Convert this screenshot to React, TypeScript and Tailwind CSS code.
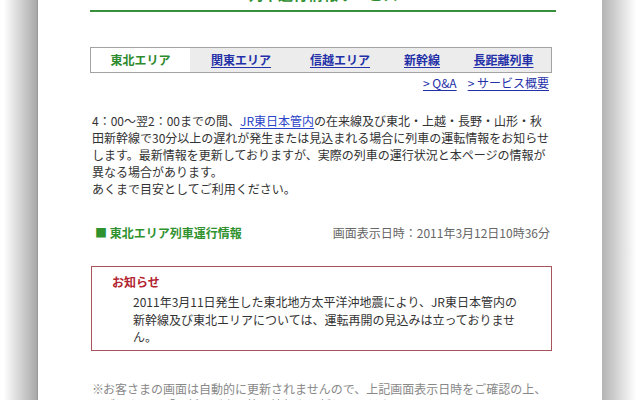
const tabs = [
  { label: "関東エリア", w: "w-[102px]" },
  { label: "信越エリア", w: "w-[96px]" },
  { label: "新幹線", w: "w-[68px]" },
  { label: "長距離列車", w: "flex-1" },
];

const App = () => {
  return (
    <div className="w-[640px] h-[400px] overflow-hidden flex bg-white font-['Noto_Sans_CJK_JP','Noto_Sans',sans-serif]">
      {/* window shadow left */}
      <div className="w-[37px] shrink-0 bg-gradient-to-r from-white from-[10%] to-[#a9a9a9]" />

      <div className="flex-1 bg-white border-l border-[#999]">
        <div className="ml-[52px] w-[466px]">
          {/* page title (cut off at top) */}
          <div className="-mt-[14px] pb-[8px] border-b-2 border-[#3a903a] text-center text-[15px] leading-[16px] font-bold text-[#2f8f2f]">
            列車運行情報サービス
          </div>

          {/* area tabs */}
          <div className="mt-[35px] w-[462px] h-[26px] flex border border-[#a3a3a3] text-[12px] font-bold">
            <div className="w-[99px] flex items-center justify-center bg-white text-[#2d8a2d]">
              東北エリア
            </div>
            {tabs.map((t) => (
              <div key={t.label} className={`${t.w} flex items-center justify-center bg-[#ececec]`}>
                <a href="#" className="text-[#2430a8] underline underline-offset-2">
                  {t.label}
                </a>
              </div>
            ))}
          </div>

          <div className="mt-[2px] w-[459px] flex justify-end gap-[11px] text-[12px] leading-[16px] text-[#2430a8]">
            <a href="#" className="underline underline-offset-2">&gt; Q&amp;A</a>
            <a href="#" className="underline underline-offset-2">&gt; サービス概要</a>
          </div>

          {/* description */}
          <p className="mt-[21px] ml-[2px] text-[12px] leading-[17px] text-[#333]">
            4：00～翌2：00までの間、
            <a href="#" className="text-[#2a44c8] underline underline-offset-2">JR東日本管内</a>
            の在来線及び東北・上越・長野・山形・秋
            <br />
            田新幹線で30分以上の遅れが発生または見込まれる場合に列車の運転情報をお知らせ
            <br />
            します。最新情報を更新しておりますが、実際の列車の運行状況と本ページの情報が
            <br />
            異なる場合があります。
            <br />
            あくまで目安としてご利用ください。
          </p>

          {/* section heading */}
          <div className="mt-[28px] w-[460px] flex justify-between text-[12px] leading-[16px]">
            <span className="ml-[5px] font-bold text-[#2f922f]">■ 東北エリア列車運行情報</span>
            <span className="text-[#666]">画面表示日時：2011年3月12日10時36分</span>
          </div>

          {/* notice */}
          <div className="mt-[25px] ml-[1px] w-[461px] border border-[#a8545c] pt-[7px] pb-[4px] text-[12px]">
            <div className="ml-[20px] leading-[16px] font-bold text-[#b2222e]">お知らせ</div>
            <p className="mt-[3px] ml-[41px] leading-[17.5px] text-[#333]">
              2011年3月11日発生した東北地方太平洋沖地震により、JR東日本管内の
              <br />
              新幹線及び東北エリアについては、運転再開の見込みは立っておりませ
              <br />
              ん。
            </p>
          </div>

          {/* footnote */}
          <div className="mt-[30px] ml-[2px] flex text-[12px] leading-[16px] text-[#888]">
            <span className="w-[11px] shrink-0">※</span>
            <p>
              お客さまの画面は自動的に更新されませんので、上記画面表示日時をご確認の上、
              <br />
              ブラウザの「更新」ボタン等で情報を更新してください。
            </p>
          </div>
        </div>
      </div>

      {/* window shadow right */}
      <div className="w-[38px] shrink-0 bg-gradient-to-l from-white from-[10%] to-[#b3b3b3]" />
    </div>
  );
};

export default App;
